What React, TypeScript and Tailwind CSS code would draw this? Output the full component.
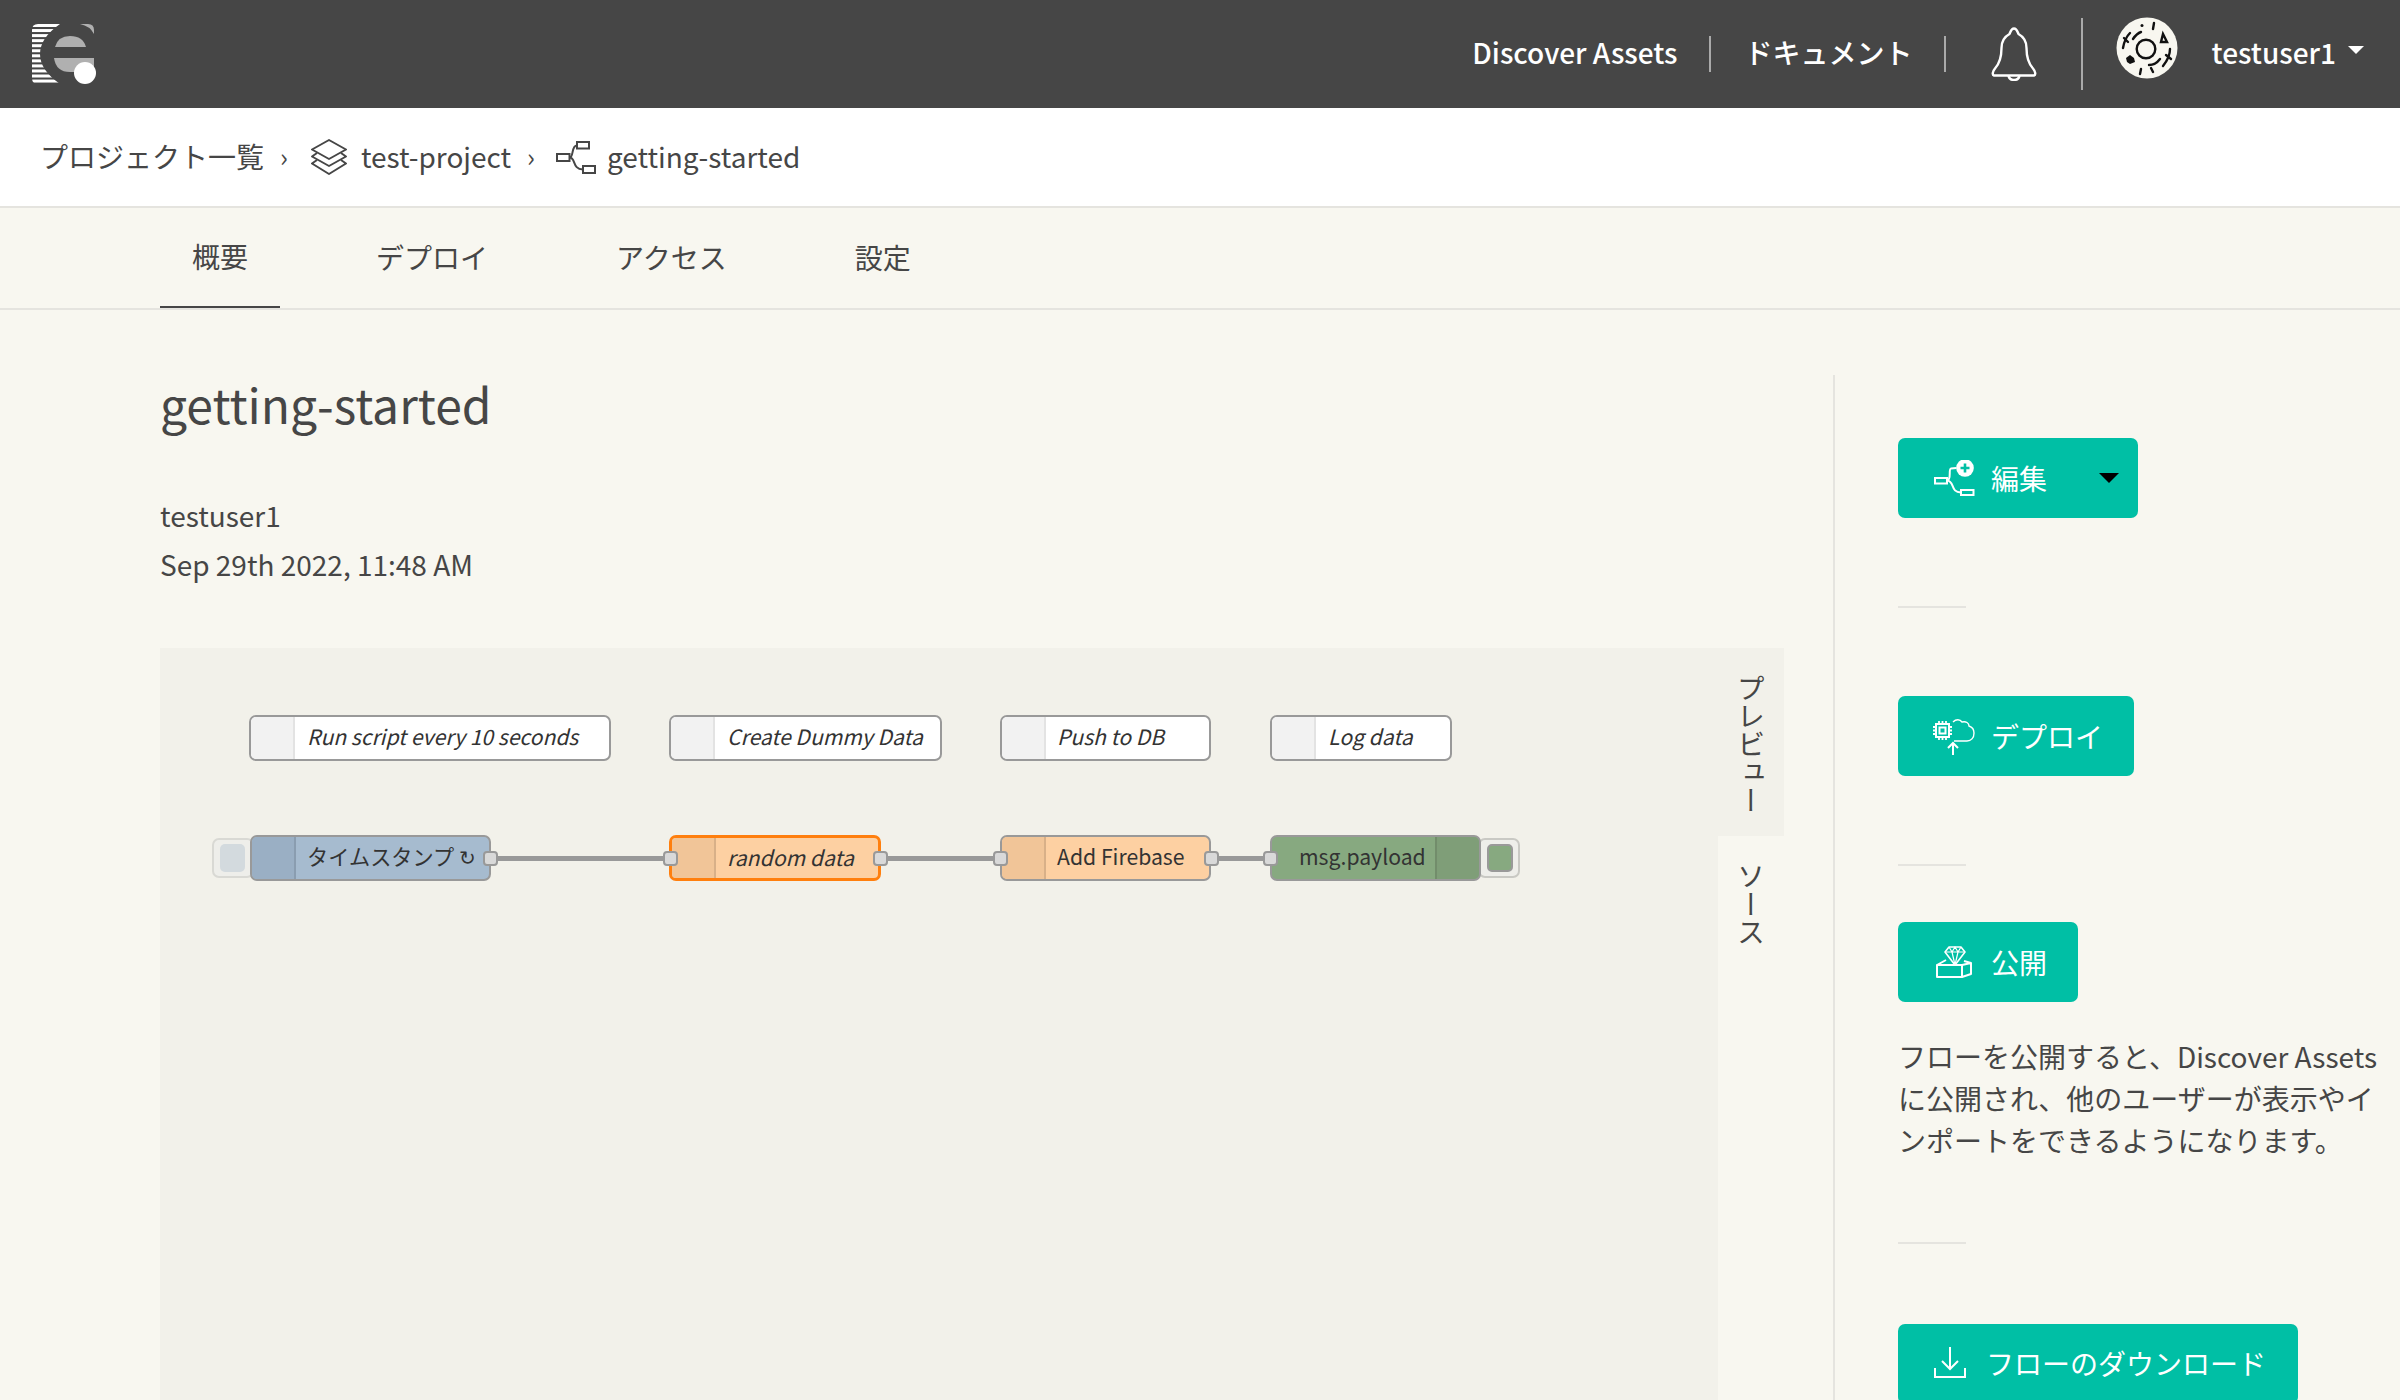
import React from "react";

const font = "[font-family:'Noto_Sans_CJK_JP','Noto_Sans',sans-serif]";

function Logo() {
  const stripes = Array.from({ length: 12 }, (_, i) => 24 + i * 5.05);
  return (
    <svg width="64" height="60" viewBox="32 24 64 60" className="shrink-0">
      <defs>
        <clipPath id="logo-c">
          <path d="M38 24H60Q40 38 40 54Q40 70 60 84H38Q32 84 32 78V30Q32 24 38 24Z" />
        </clipPath>
      </defs>
      <g clipPath="url(#logo-c)" fill="#fff">
        {stripes.map((y) => (
          <rect key={y} x="30" y={y} width="34" height="3" />
        ))}
      </g>
      <path d="M80 24H88Q94 24 94 30V34Q90 26 80 24Z" fill="#b0b0b0" />
      <path d="M55 47Q58 36 70 36Q83 36 86 47Z" fill="#b0b0b0" />
      <path d="M54 58H94V72H70Q56 72 54 58Z" fill="#b0b0b0" />
      <circle cx="85" cy="73" r="11" fill="#fff" />
    </svg>
  );
}

function Bell() {
  return (
    <svg width="48" height="54" viewBox="0 0 48 54" fill="none" stroke="#fff" strokeWidth="2.4" strokeLinejoin="round">
      <path d="M24 1.5C21 1.5 20.5 5 19.5 7C14 10 11.5 15 11.5 21C11.5 30 10 36 5 41.5C2.5 44.5 2 48 4 48.5H44C46 48 45.5 44.5 43 41.5C38 36 36.5 30 36.5 21C36.5 15 34 10 28.5 7C27.5 5 27 1.5 24 1.5Z" />
      <path d="M18.5 48.5C19 52 21.5 53 24 53C26.5 53 29 52 29.5 48.5" />
    </svg>
  );
}

function Avatar() {
  return (
    <svg width="62" height="62" viewBox="0 0 62 62">
      <circle cx="31" cy="31" r="30.5" fill="#f8f7f0" />
      <g fill="none" stroke="#111" strokeWidth="2.4" strokeLinecap="round">
        <circle cx="30" cy="32" r="9.3" />
        <path d="M17 22C19 19 22 16 25 15" />
        <path d="M7 31C8 25 10 20 14 16" />
        <path d="M8 21L12 25" />
        <path d="M38 6L37 12" />
        <path d="M45 25L51 25L47 17Z" />
        <path d="M54 32C54 38 51 44 47 49" />
        <path d="M50 38L55 42" />
        <path d="M33 48C37 48 41 46 44 42" />
        <path d="M25 52L24 57" />
        <path d="M35 51L37 55" />
      </g>
      <circle cx="26" cy="8.5" r="1.5" fill="#111" />
      <path d="M10 41L14 38L18 41L19 45L14 47L11 45Z" fill="#111" />
    </svg>
  );
}

function Stack() {
  return (
    <svg width="38" height="36" viewBox="0 0 38 36" fill="none" stroke="#464646" strokeWidth="2" strokeLinejoin="round">
      <path d="M19 1L36 10.5L19 20L2 10.5Z" />
      <path d="M7 14L2 17.5L19 27L36 17.5L31 14" />
      <path d="M7 21L2 24.5L19 35L36 24.5L31 21" />
    </svg>
  );
}

function FlowIcon() {
  return (
    <svg width="40" height="33" viewBox="0 0 40 33" fill="none" stroke="#464646" strokeWidth="2">
      <rect x="1" y="13" width="12.5" height="7" />
      <rect x="21" y="1" width="12" height="6.5" />
      <rect x="27" y="25" width="12" height="7" />
      <path d="M13.5 16.5C18 16.5 15 4.5 21 4.5" />
      <path d="M13.5 16.5C20 16.5 16 28.5 27 28.5" />
    </svg>
  );
}

function EditIcon() {
  return (
    <svg width="41" height="36" viewBox="0 0 41 36" fill="none" stroke="#fff" strokeWidth="2">
      <rect x="1" y="18" width="12" height="5.5" />
      <rect x="27" y="30" width="12.5" height="5" />
      <path d="M13 20.5C18 20 14 9 17 8.5C19 8 21 8 22.5 8" />
      <path d="M13 20.5C21 21 16 32.5 27 32.5" />
      <circle cx="31" cy="8" r="8.8" fill="#fff" stroke="none" />
      <path d="M31 3.5V12.5M26.5 8H35.5" stroke="#00bfa5" strokeWidth="2.6" />
    </svg>
  );
}

function DeployIcon() {
  return (
    <svg width="42" height="37" viewBox="0 0 42 37" fill="none" stroke="#fff" strokeWidth="1.8">
      <rect x="3" y="6" width="13" height="13" strokeWidth="2" />
      <rect x="6.5" y="9.5" width="6" height="6" strokeWidth="2" />
      <path d="M6 3V6M9.5 3V6M13 3V6M6 19V22M9.5 19V22M13 19V22M0 9H3M0 12.5H3M0 16H3M16 9H19M16 12.5H19M16 16H19" />
      <path d="M20 4C23 1 27 1 29 4C33 3 36 5 36 8C39 9 41 12 41 15C41 20 38 23 34 23H21" strokeWidth="1.4" />
      <path d="M20 37V25M15 30L20 25L25 30" strokeWidth="2" />
    </svg>
  );
}

function PublishIcon() {
  return (
    <svg width="36" height="32" viewBox="0 0 36 32" fill="none" stroke="#fff" strokeWidth="2" strokeLinejoin="round">
      <path d="M1 31V19H26V31Z" />
      <path d="M26 31L35 28V17L26 19" />
      <path d="M1 19L10 14M35 17L28 15" />
      <path d="M13 1H25L29 6L19 19L9 6Z" strokeWidth="1.6" />
      <path d="M9 6H29M16 6L19 19L22 6M13 1L16 6L19 1L22 6L25 1" strokeWidth="1.2" />
    </svg>
  );
}

function DownloadIcon() {
  return (
    <svg width="32" height="31" viewBox="0 0 32 31" fill="none" stroke="#fff" strokeWidth="2">
      <path d="M16 0V22M8 14L16 22L24 14" />
      <path d="M1 21V30H31V21" />
    </svg>
  );
}

function TealButton({ icon, label, className, caret }: { icon: React.ReactNode; label: string; className: string; caret?: boolean }) {
  return (
    <div className={`h-20 flex items-center bg-[#00bfa5] rounded-[7px] text-white text-[28px] ${className}`}>
      {icon}
      <span className="whitespace-nowrap">{label}</span>
      {caret && <span className="ml-[36px] w-0 h-0 border-x-[10px] border-x-transparent border-t-[10px] border-t-black" />}
    </div>
  );
}

function Port({ x }: { x: number }) {
  return (
    <span
      className="absolute w-[15px] h-[15px] bg-[#d9d9d9] border-2 border-[#999] rounded-[4px] z-20"
      style={{ left: x - 7.5 - 160, top: 851 - 648 }}
    />
  );
}

function Wire({ from, to }: { from: number; to: number }) {
  return <span className="absolute h-[5px] bg-[#999]" style={{ left: from - 160, width: to - from, top: 856 - 648 }} />;
}

function Comment({ x, w, text, pad = 11 }: { x: number; w: number; text: string; pad?: number }) {
  return (
    <div
      className="absolute top-[67px] h-[46px] flex bg-white border-2 border-[#999] rounded-[7px] overflow-hidden text-[#333] text-[21.1px] italic"
      style={{ left: x - 160, width: w }}
    >
      <span className="w-[44px] shrink-0 bg-[#f2f2f2] border-r-2 border-[#e3e3e3]" />
      <span className="leading-[38px] whitespace-nowrap" style={{ paddingLeft: pad }}>{text}</span>
    </div>
  );
}

function Node({ x, w, text, bg, side, italic, selected, right, pad = 11, suffix }: { x: number; w: number; text: string; bg: string; side: string; italic?: boolean; selected?: boolean; right?: boolean; pad?: number; suffix?: string }) {
  return (
    <div
      className={`absolute top-[187px] h-[46px] flex rounded-[7px] overflow-hidden text-[#333] text-[21.2px] z-10 ${selected ? "border-[3px] border-[#ff7f0e]" : "border-2 border-[#999]"} ${italic ? "italic" : ""} ${right ? "flex-row-reverse" : ""}`}
      style={{ left: x - 160, width: w, backgroundColor: bg }}
    >
      <span className="w-[44px] shrink-0 border-black/10" style={{ backgroundColor: side, borderRightWidth: right ? 0 : 2, borderLeftWidth: right ? 2 : 0 }} />
      <span className="flex-1 leading-[38px] whitespace-nowrap" style={{ paddingLeft: pad }}>
        {text}
        {suffix && <span className="ml-[5px] text-[20px]">{suffix}</span>}
      </span>
    </div>
  );
}

export default function App() {
  return (
    <div className={`h-[1400px] w-[2400px] overflow-hidden bg-[#f8f7f0] text-[#464646] text-[28px] ${font}`}>
      <header className="h-[108px] bg-[#464646] flex items-center pl-8 pr-9 text-white">
        <Logo />
        <div className="ml-auto flex items-center">
          <span className="pb-[5px] font-medium">Discover Assets</span>
          <span className="ml-[31px] w-0.5 h-9 bg-[#aaa]" />
          <span className="ml-[34px] pb-[5px] font-medium">ドキュメント</span>
          <span className="ml-[31px] w-0.5 h-9 bg-[#aaa]" />
          <span className="ml-[44px]"><Bell /></span>
          <span className="ml-[43px] w-0.5 h-[72px] bg-[#aaa]" />
          <span className="ml-[33px] mb-[12px]"><Avatar /></span>
          <span className="ml-[34px] pb-[5px] font-medium">testuser1</span>
          <span className="ml-3 mb-2 w-0 h-0 border-x-[8px] border-x-transparent border-t-[8px] border-t-white" />
        </div>
      </header>

      <nav className="h-[100px] bg-white border-b-2 border-[#e5e4df] flex items-center pl-[40px]">
        <span className="pb-[3px]">プロジェクト一覧</span>
        <span className="ml-4 text-[26px] pb-[3px]">›</span>
        <span className="ml-[22px]"><Stack /></span>
        <span className="ml-[13px] pb-[3px]">test-project</span>
        <span className="ml-4 text-[26px] pb-[3px]">›</span>
        <span className="ml-[21px]"><FlowIcon /></span>
        <span className="ml-[11px] pb-[3px]">getting-started</span>
      </nav>

      <div className="h-[102px] border-b-2 border-[#e5e4df] flex gap-16 pl-40">
        <div className="px-8 pb-[3px] h-[100px] flex items-center border-b-2 border-[#464646]">概要</div>
        <div className="px-8 pb-[3px] h-[100px] flex items-center">デプロイ</div>
        <div className="px-8 pb-[3px] h-[100px] flex items-center">アクセス</div>
        <div className="px-8 pb-[3px] h-[100px] flex items-center">設定</div>
      </div>

      <div className="flex">
        <section className="w-[1624px] ml-40">
          <h1 className="mt-[58px] h-[70px] text-[48px] leading-[70px]">getting-started</h1>
          <div className="mt-[53px] leading-[49px]">testuser1</div>
          <div className="leading-[49px]">Sep 29th 2022, 11:48 AM</div>
          <div className="mt-[59px] h-[752px] flex">
            <div className="relative flex-1 bg-[#f2f1ea]">
              <Comment x={249} w={362} text="Run script every 10 seconds" pad={12} />
              <Comment x={669} w={273} text="Create Dummy Data" pad={12} />
              <Comment x={1000} w={211} text="Push to DB" />
              <Comment x={1270} w={182} text="Log data" pad={12} />

              <span className="absolute left-[52px] top-[190px] w-[42px] h-[40px] bg-[#eeeeea] border-2 border-[#d9d9d4] rounded-[7px]" />
              <span className="absolute left-[60px] top-[196px] w-[25px] h-[28px] bg-[#d3dade] rounded-[5px]" />
              <span className="absolute left-[1318px] top-[190px] w-[42px] h-[40px] bg-[#eeeeea] border-2 border-[#c9c9c4] rounded-[7px]" />
              <span className="absolute left-[1327px] top-[196px] w-[26px] h-[28px] bg-[#87a980] border-2 border-[#999] rounded-[5px]" />

              <Wire from={491} to={670} />
              <Wire from={881} to={1000} />
              <Wire from={1211} to={1270} />

              <Node x={250} w={241} text="タイムスタンプ" suffix="↻" bg="#a6bbcf" side="#9aafc4" />
              <Node x={669} w={212} text="random data" bg="#fdd0a2" side="#f1c598" italic selected />
              <Node x={1000} w={211} text="Add Firebase" bg="#fdd0a2" side="#f1c598" />
              <Node x={1270} w={211} text="msg.payload" bg="#87a980" side="#7f9e78" right pad={27} />

              <Port x={490} />
              <Port x={670} />
              <Port x={880} />
              <Port x={1000} />
              <Port x={1211} />
              <Port x={1270} />
            </div>
            <div className="w-[66px] flex flex-col">
              <div className="h-[188px] bg-[#f2f1ea] flex justify-center pt-[26px]">
                <span className="[writing-mode:vertical-rl]">プレビュー</span>
              </div>
              <div className="flex-1 flex justify-center pt-[26px]">
                <span className="[writing-mode:vertical-rl]">ソース</span>
              </div>
            </div>
          </div>
        </section>

        <aside className="ml-[49px] mt-[65px] h-[1100px] border-l-2 border-[#e5e4df] pl-[63px] pt-[63px] flex flex-col items-start">
          <TealButton className="w-60 pl-9 gap-4" icon={<EditIcon />} label="編集" caret />
          <span className="mt-[88px] w-[68px] h-0.5 bg-[#e5e4df]" />
          <TealButton className="mt-[88px] pl-[35px] pr-[31px] gap-4" icon={<DeployIcon />} label="デプロイ" />
          <span className="mt-[88px] w-[68px] h-0.5 bg-[#e5e4df]" />
          <TealButton className="mt-14 pl-[38px] pr-[31px] gap-[19px]" icon={<PublishIcon />} label="公開" />
          <p className="mt-[33px] w-[482px] leading-[42px] text-[28px]">フローを公開すると、Discover Assetsに公開され、他のユーザーが表示やインポートをできるようになります。</p>
          <span className="mt-[81px] w-[68px] h-0.5 bg-[#e5e4df]" />
          <TealButton className="mt-20 pl-9 pr-[32px] pb-[3px] gap-[20px]" icon={<DownloadIcon />} label="フローのダウンロード" />
        </aside>
      </div>
    </div>
  );
}
